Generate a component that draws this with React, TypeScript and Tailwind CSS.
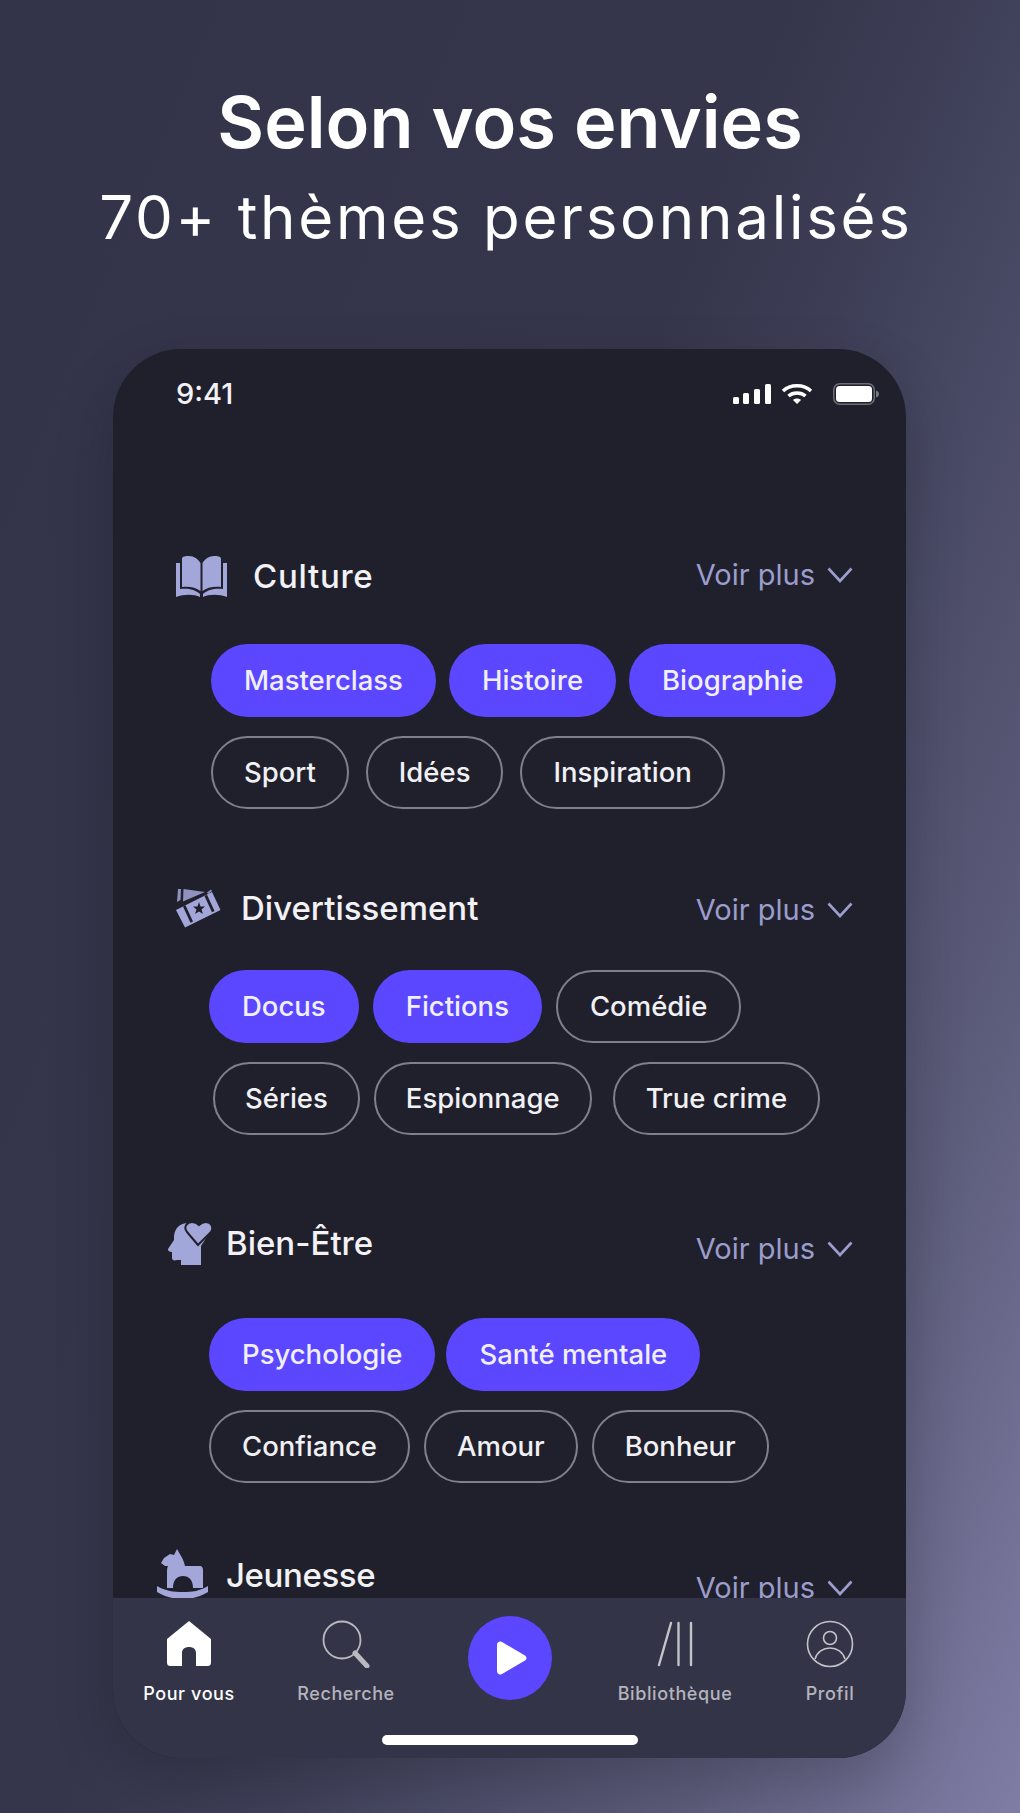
import type { ReactNode } from 'react';

type Chip = { label: string; on?: boolean; className?: string };

const BookIcon = () => (
  <svg width="51" height="42" viewBox="0 0 51 42" fill="#a3a6d8">
    <path d="M6 3C6 0 10 0 13 0C18 0 22 3 24.5 7V35C20 31 12 30 6 31Z" />
    <path d="M45 3C45 0 41 0 38 0C33 0 29 3 26.5 7V35C31 31 39 30 45 31Z" />
    <path d="M0 7H4V33C11 32 19 33 24 38V41C18 38 8 38 0 41Z" />
    <path d="M51 7H47V33C40 32 32 33 27 38V41C33 38 43 38 51 41Z" />
  </svg>
);

const TicketIcon = () => (
  <svg width="45" height="40" viewBox="0 0 45 40" fill="#a3a6d8">
    <path d="M2 0H5L4.5 11 1 13ZM7.5 0L29 3 7 12.5ZM31 3.5L35 0.5 36 2 32 5Z" opacity="0.85" />
    <path d="M0 21L36 3 44.5 21 9 38.5Z" />
    <path d="M7 17.5L9.5 16.3 17 32.5 14.5 33.7ZM28.5 7L31 5.8 38.5 22 36 23.2Z" fill="#20202d" />
    <path d="M23 13L24.5 17.5 29 17.5 25.5 20.5 27 25 23 22.5 19 25 20.5 20.5 17 17.5 21.5 17.5Z" fill="#20202d" />
  </svg>
);

const HeadIcon = () => (
  <svg width="45" height="43" viewBox="0 0 45 43" fill="#a3a6d8" className="-mt-[2px]">
    <path d="M20 1C12 1 7 6 6 14V18L0 27C0 29 1 30 4 30V36C4 38 6 39 9 38H13V43H33V24L40 13Z" />
    <path d="M30 23L19 10C15 5 19 0 24 0C27 0 29 1 31 3C33 1 35 0 38 0C43 0 46 5 43 10Z" stroke="#20202d" strokeWidth="2" />
  </svg>
);

const HorseIcon = () => (
  <svg width="52" height="50" viewBox="0 0 52 50" fill="#a3a6d8" className="-mt-[5px]">
    <path d="M20 0L24 7C26 10 27 13 28 17H43C45 17 46 19 46 21V39H36C36 31 32 27 26 27C20 27 16 31 16 39H10V24C10 21 10 19 11 17H8L4 14 7 9 13 5 17 6Z" />
    <path d="M0 37C8 42 17 43 26 43C35 43 43 42 51 37V43C43 48 34 50 26 50C17 50 8 48 0 43Z" />
  </svg>
);

const SignalIcon = () => (
  <svg width="38" height="20" viewBox="0 0 38 20" fill="#fff">
    <rect x="0" y="13" width="6" height="7" rx="1.5" />
    <rect x="10" y="9" width="6" height="11" rx="1.5" />
    <rect x="21" y="5" width="6" height="15" rx="1.5" />
    <rect x="32" y="0" width="6" height="20" rx="1.5" />
  </svg>
);

const WifiIcon = () => (
  <svg width="32" height="22" viewBox="0 0 32 22" fill="none" stroke="#fff" strokeWidth="3.4">
    <path d="M2 8C9 1 23 1 30 8" />
    <path d="M7.5 13C12 9 20 9 24.5 13" />
    <path d="M16 21L12 17C14 15 18 15 20 17Z" fill="#fff" stroke="none" />
  </svg>
);

const BatteryIcon = () => (
  <svg width="46" height="22" viewBox="0 0 46 22" fill="none">
    <rect x="0.75" y="0.75" width="40.5" height="20.5" rx="6" stroke="#fff" strokeOpacity="0.35" strokeWidth="1.5" />
    <rect x="3" y="3" width="36" height="16" rx="3.5" fill="#fff" />
    <path d="M43 7.5C45 8 46 9.5 46 11C46 12.5 45 14 43 14.5Z" fill="#fff" fillOpacity="0.4" />
  </svg>
);

const HomeIcon = () => (
  <svg width="48" height="48" viewBox="0 0 48 48" fill="#fff">
    <path d="M24 1L46 19V42C46 45 45 46 42 46H31V33C31 29 28 27 24 27C20 27 17 29 17 33V46H6C3 46 2 45 2 42V19Z" />
  </svg>
);

const SearchIcon = () => (
  <svg width="48" height="48" viewBox="0 0 48 48" fill="none" stroke="#b9b9c0">
    <circle cx="20" cy="20" r="18.5" strokeWidth="1.8" />
    <path d="M33 33L45 46" strokeWidth="5" strokeLinecap="round" />
  </svg>
);

const LibraryIcon = () => (
  <svg width="36" height="46" viewBox="0 0 36 46" fill="none" stroke="#c3c3ca" strokeWidth="2.4" strokeLinecap="round">
    <path d="M14 2L2 44" />
    <path d="M21.5 2V44" />
    <path d="M34 2V44" />
  </svg>
);

const ProfileIcon = () => (
  <svg width="48" height="48" viewBox="0 0 48 48" fill="none" stroke="#c3c3ca" strokeWidth="1.6">
    <circle cx="24" cy="24" r="22.5" />
    <circle cx="24" cy="18" r="6.5" />
    <path d="M9 39C11 32 17 28 24 28C31 28 37 32 39 39" />
  </svg>
);

function Pill({ label, on, className = 'px-[31px]' }: Chip) {
  return on ? (
    <span className="h-[73px] px-[33px] rounded-full bg-[#5a47ff] text-[#f1effc] flex items-center">{label}</span>
  ) : (
    <span className={`h-[73px] rounded-full border-2 border-[#80808a] text-[#f1f1f4] flex items-center ${className}`}>{label}</span>
  );
}

function Header({ icon, title, boxClass, textClass, moreClass }: { icon: ReactNode; title: string; boxClass: string; textClass: string; moreClass: string }) {
  return (
    <div className={`h-10 flex items-center justify-between pr-[53px] ${boxClass}`}>
      <div className="flex items-center">
        {icon}
        <span className={`text-[33px] font-medium text-[#f2f2f5] ${textClass}`}>{title}</span>
      </div>
      <div className={`flex items-center gap-[12px] text-[29px] font-normal text-[#9b9dcc] ${moreClass}`}>
        Voir plus
        <svg width="26" height="16" viewBox="0 0 26 16" fill="none" stroke="#9b9dcc" strokeWidth="2.6">
          <path d="M1.5 1.5L13 14L24.5 1.5" />
        </svg>
      </div>
    </div>
  );
}

function NavItem({ icon, label, active }: { icon: ReactNode; label: string; active?: boolean }) {
  return (
    <div className="flex flex-col items-center">
      <div className="h-12 flex items-center justify-center">{icon}</div>
      <span className={`mt-[12px] text-[18px] tracking-[0.6px] font-medium ${active ? 'text-white' : 'text-[#b4b4bc]'}`}>{label}</span>
    </div>
  );
}

export default function App() {
  return (
    <div className="w-[1020px] h-[1813px] overflow-hidden bg-[linear-gradient(112deg,#33344a_0%,#35364b_45%,#40415a_58%,#5d5d7c_81%,#807da5_100%)] font-['Inter','Noto_Sans',sans-serif]">
      <div className="pt-[80px] text-center text-white">
        <h1 className="text-[72px] leading-[84px] font-semibold">Selon vos envies</h1>
        <p className="mt-[17px] pr-[8px] text-[60px] leading-[72px] tracking-[2.75px]">70+ thèmes personnalisés</p>
      </div>

      <div className="mt-[96px] ml-[113px] w-[793px] h-[1409px] rounded-[68px] bg-[#20202d] overflow-hidden flex flex-col shadow-[0_24px_60px_rgba(0,0,0,0.2)]">
        <div className="pt-[28px] pl-[63px] pr-[27px] flex items-center justify-between">
          <span className="text-[29px] leading-[34px] font-medium text-[#f2f2f5]">9:41</span>
          <div className="flex items-center gap-[10px]">
            <SignalIcon />
            <WifiIcon />
            <span className="ml-[10px]"><BatteryIcon /></span>
          </div>
        </div>

        <div className="flex-1 overflow-hidden pt-[146px] text-[27.5px] font-medium">
          <Header icon={<BookIcon />} title="Culture" boxClass="pl-[63px]" textClass="ml-[26px] tracking-[0.7px]" moreClass="-mt-1" />
          <div className="mt-[47px] flex gap-[13px] pl-[98px]">
            <Pill label="Masterclass" on />
            <Pill label="Histoire" on />
            <Pill label="Biographie" on />
          </div>
          <div className="mt-[19px] flex gap-[17px] pl-[98px]">
            <Pill label="Sport" />
            <Pill label="Idées" />
            <Pill label="Inspiration" />
          </div>

          <Header icon={<TicketIcon />} title="Divertissement" boxClass="mt-[80px] pl-[63px]" textClass="ml-[20px]" moreClass="mt-0.5" />
          <div className="mt-[41px] flex gap-[14px] pl-[96px]">
            <Pill label="Docus" on />
            <Pill label="Fictions" on />
            <Pill label="Comédie" className="px-[32px]" />
          </div>
          <div className="mt-[19px] flex gap-[14px] pl-[100px]">
            <Pill label="Séries" className="px-[30px]" />
            <Pill label="Espionnage" className="px-[30px]" />
            <Pill label="True crime" className="ml-[7px] px-[31px]" />
          </div>

          <Header icon={<HeadIcon />} title="Bien-Être" boxClass="mt-[89px] pl-[55px]" textClass="ml-[13px]" moreClass="mt-2.5" />
          <div className="mt-[54px] flex gap-[11px] pl-[96px]">
            <Pill label="Psychologie" on />
            <Pill label="Santé mentale" on />
          </div>
          <div className="mt-[19px] flex gap-[14px] pl-[96px]">
            <Pill label="Confiance" />
            <Pill label="Amour" />
            <Pill label="Bonheur" />
          </div>

          <Header icon={<HorseIcon />} title="Jeunesse" boxClass="mt-[73px] pl-[44px]" textClass="ml-[17px] tracking-[-0.4px]" moreClass="mt-6" />
        </div>

        <div className="h-[160px] shrink-0 bg-[#343448] pt-[22px]">
          <div className="grid grid-cols-[152px_162px_166px_164px_146px] items-start">
            <NavItem icon={<HomeIcon />} label="Pour vous" active />
            <NavItem icon={<SearchIcon />} label="Recherche" />
            <div className="flex justify-center -mt-[4px]">
              <div className="w-[84px] h-[84px] rounded-full bg-[#5a47ff] flex items-center justify-center">
                <svg width="30" height="34" viewBox="0 0 30 34" fill="#fff" className="ml-1">
                  <path d="M3 0.5C1.5 0.5 0 2 0 4V30C0 32 1.5 33.5 3 33.5C4 33.5 5 33 5.5 32.7L28 19.5C30 18 30 16 28 14.5L5.5 1.3C5 1 4 0.5 3 0.5Z" />
                </svg>
              </div>
            </div>
            <NavItem icon={<LibraryIcon />} label="Bibliothèque" />
            <NavItem icon={<ProfileIcon />} label="Profil" />
          </div>
          <div className="mt-[28px] mx-auto w-[256px] h-[10px] rounded-full bg-white" />
        </div>
      </div>
    </div>
  );
}
